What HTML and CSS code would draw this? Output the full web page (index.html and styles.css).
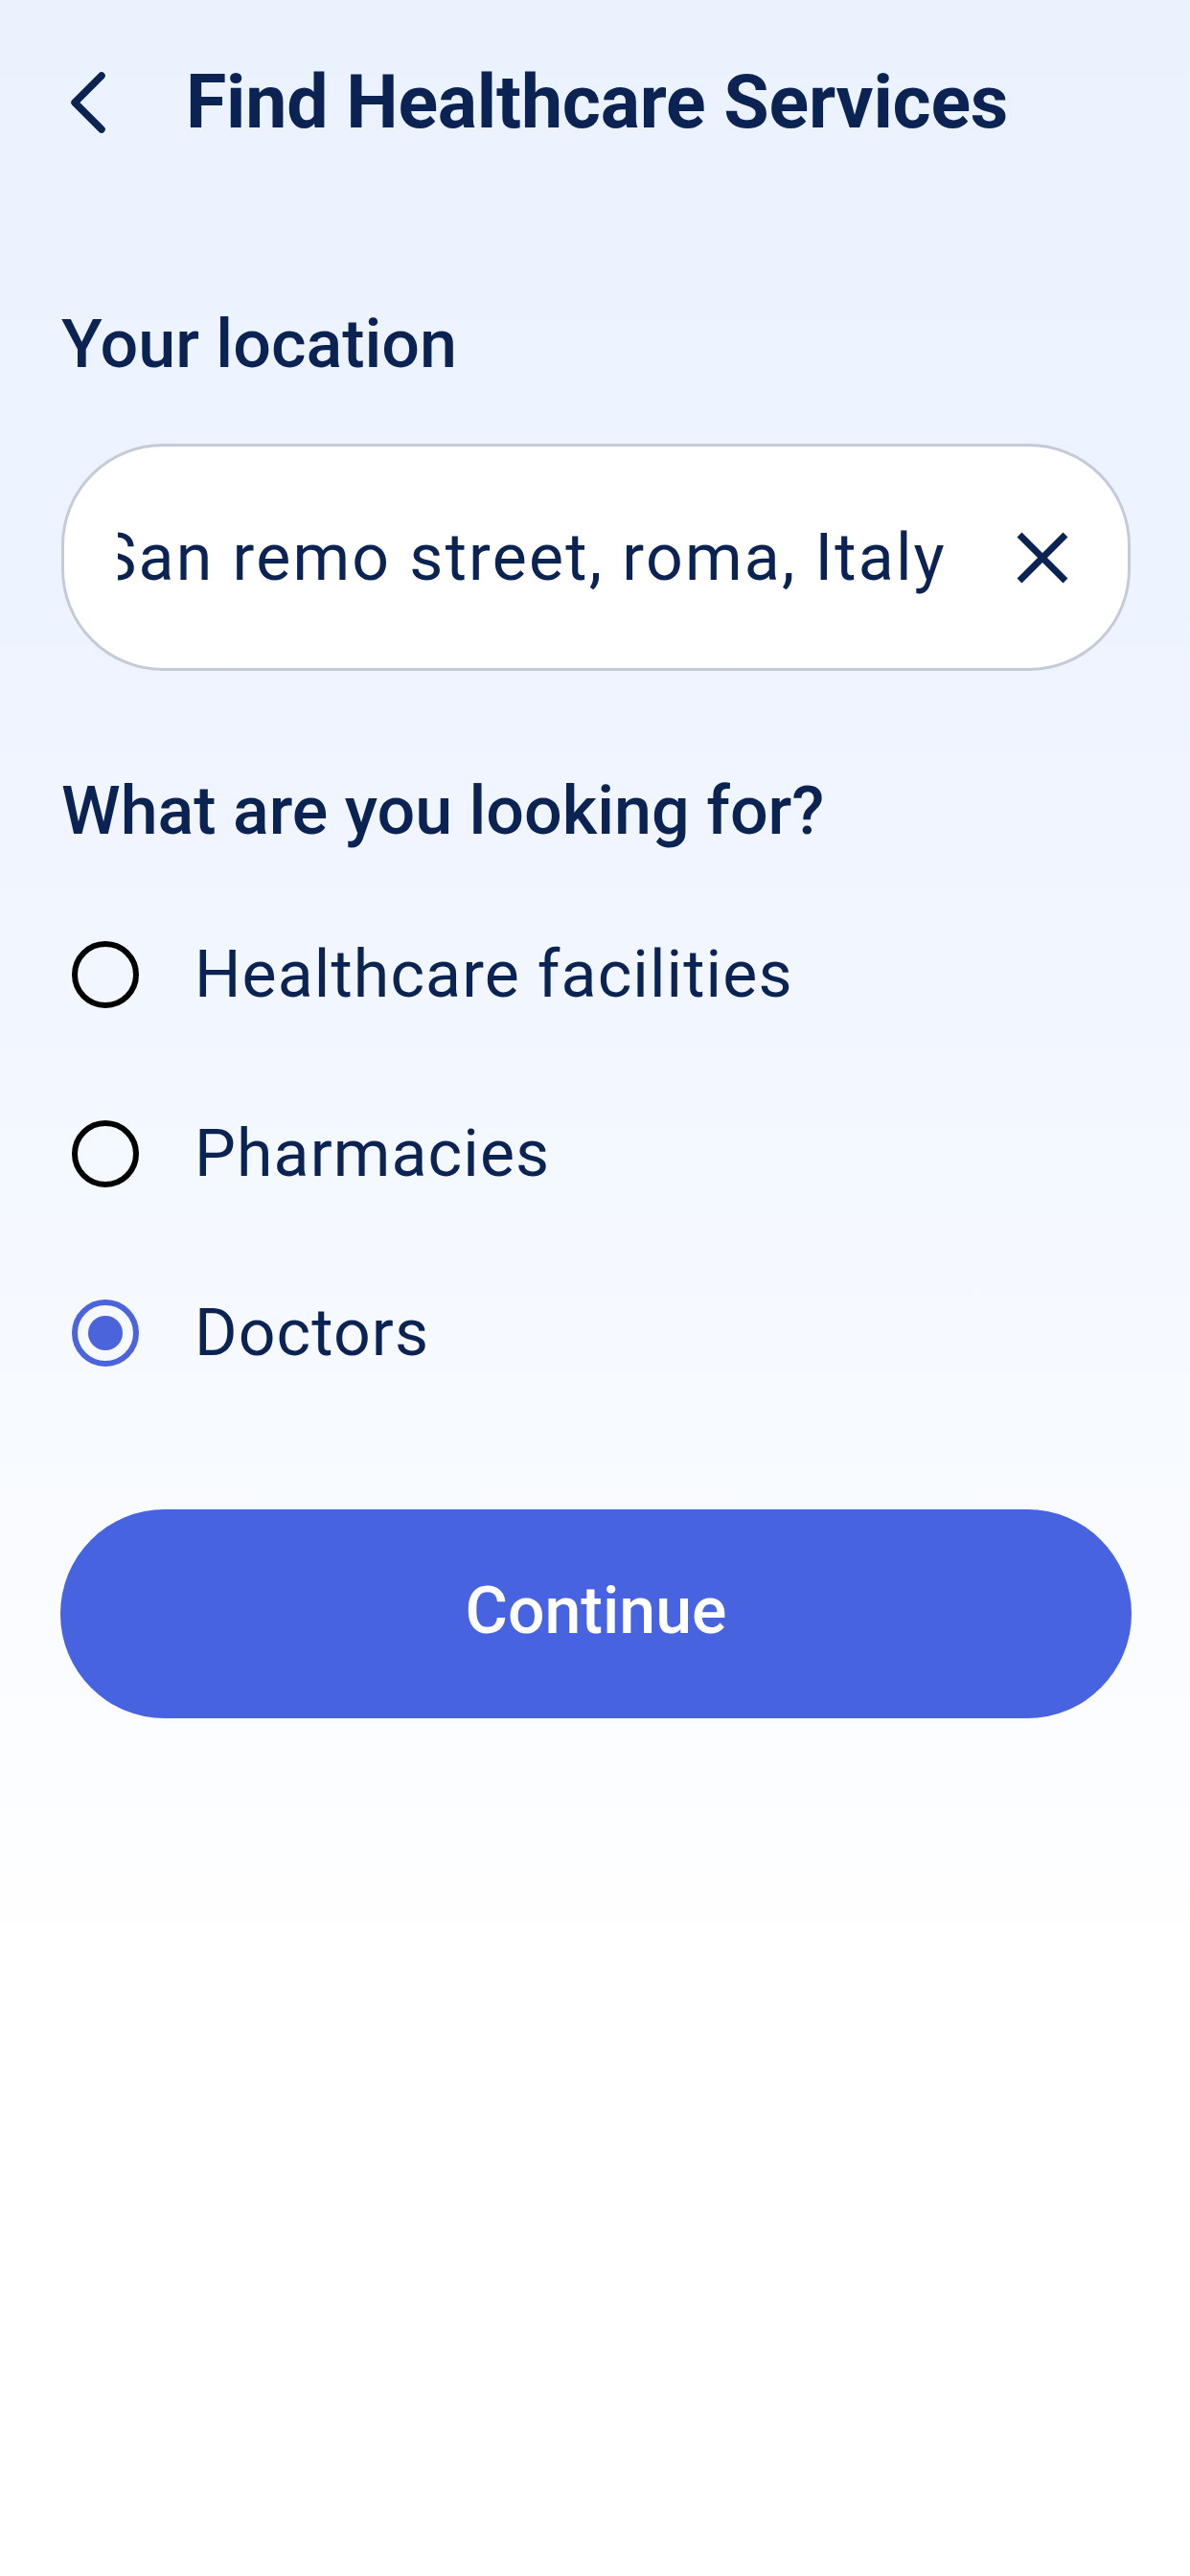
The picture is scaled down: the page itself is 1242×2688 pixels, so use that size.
FILE: index.html
```html
<!DOCTYPE html>
<html lang="en">
<head>
<meta charset="utf-8">
<title>Find Healthcare Services</title>
<link rel="stylesheet" href="styles.css">
</head>
<body>
<div class="screen">
  <header class="header">
    <button class="back" aria-label="Back">
      <svg width="40" height="64" viewBox="0 0 40 64"><polyline points="34,4 6,32 34,60" fill="none" stroke="#0B2352" stroke-width="7.5" stroke-linecap="round" stroke-linejoin="round"/></svg>
    </button>
    <h1 class="title">Find Healthcare Services</h1>
  </header>

  <main class="content">
    <h2 class="label">Your location</h2>
    <div class="field">
      <div class="field-clip"><span class="field-text">San remo street, roma, Italy</span></div>
      <button class="clear" aria-label="Clear">
        <svg width="54" height="54" viewBox="0 0 54 54"><path d="M3 3 L51 51 M51 3 L3 51" stroke="#0B2352" stroke-width="7" fill="none"/></svg>
      </button>
    </div>

    <h2 class="label label-second">What are you looking for?</h2>
    <div class="options">
      <div class="option"><span class="radio"></span><span class="option-text">Healthcare facilities</span></div>
      <div class="option"><span class="radio"></span><span class="option-text">Pharmacies</span></div>
      <div class="option"><span class="radio radio-on"></span><span class="option-text">Doctors</span></div>
    </div>

    <button class="continue">Continue</button>
  </main>
</div>
</body>
</html>
```
FILE: styles.css
```css
* { box-sizing: border-box; }
html, body { margin: 0; padding: 0; }
body {
  width: 1242px;
  height: 2688px;
  font-family: Roboto, "Noto Sans", "Liberation Sans", sans-serif;
  color: #0B2352;
  background: linear-gradient(180deg, #EAF2FE 0px, #F0F5FF 900px, #F7FAFF 1500px, #FFFFFF 2100px, #FFFFFF 2688px);
}
.screen { width: 1242px; min-height: 2688px; }

.header {
  display: flex;
  align-items: center;
  height: 214px;
  padding-left: 72px;
}
.back {
  border: 0; background: none; padding: 0; margin: 0;
  width: 40px; height: 64px;
  display: flex; align-items: center; justify-content: center;
}
.back svg { display: block; }
.title {
  margin: 0 0 0 82px;
  font-size: 77px;
  line-height: 77px;
  font-weight: 700;
  letter-spacing: -0.2px;
}

.content {
  display: flex;
  flex-direction: column;
  padding: 110px 62px 0 64px;
}
.label {
  margin: 0;
  font-size: 70px;
  line-height: 70px;
  font-weight: 500;
}
.label-second { margin-top: 111px; }

.field {
  margin-top: 69px;
  height: 237px;
  background: #FFFFFF;
  border: 3px solid #C4CBD8;
  border-radius: 106px;
  display: flex;
  align-items: center;
  padding: 0 62px 0 56px;
}
.field-clip {
  flex: 0 0 auto;
  width: 865px;
  overflow: hidden;
  display: flex;
  justify-content: flex-end;
  white-space: nowrap;
}
.field-text {
  flex: 0 0 auto;
  font-size: 68px;
  line-height: 80px;
  letter-spacing: 2.2px;
  font-weight: 400;
}
.clear {
  margin-left: auto;
  border: 0; background: none; padding: 0;
  width: 54px; height: 54px;
  display: flex;
}
.clear svg { display: block; }

.options {
  margin-top: 76px;
  display: flex;
  flex-direction: column;
  gap: 67px;
}
.option {
  display: flex;
  align-items: center;
  height: 120px;
  padding-left: 11px;
}
.radio {
  width: 70px; height: 70px;
  border-radius: 50%;
  border: 6.5px solid #000000;
  flex: 0 0 auto;
  display: flex; align-items: center; justify-content: center;
}
.radio-on { border-color: #4B63DB; }
.radio-on::after {
  content: "";
  width: 36px; height: 36px;
  border-radius: 50%;
  background: #4B63DB;
}
.option-text {
  margin-left: 58px;
  font-size: 68px;
  line-height: 68px;
  letter-spacing: 1.1px;
  font-weight: 400;
}

.continue {
  margin-top: 124px;
  height: 218px;
  width: 1118px;
  margin-left: -1px;
  border: 0;
  border-radius: 109px;
  background: #4763DF;
  color: #FFFFFF;
  font-family: Roboto, "Noto Sans", "Liberation Sans", sans-serif;
  font-size: 68px;
  font-weight: 500;
  padding: 0 0 6px 0;
}
```
